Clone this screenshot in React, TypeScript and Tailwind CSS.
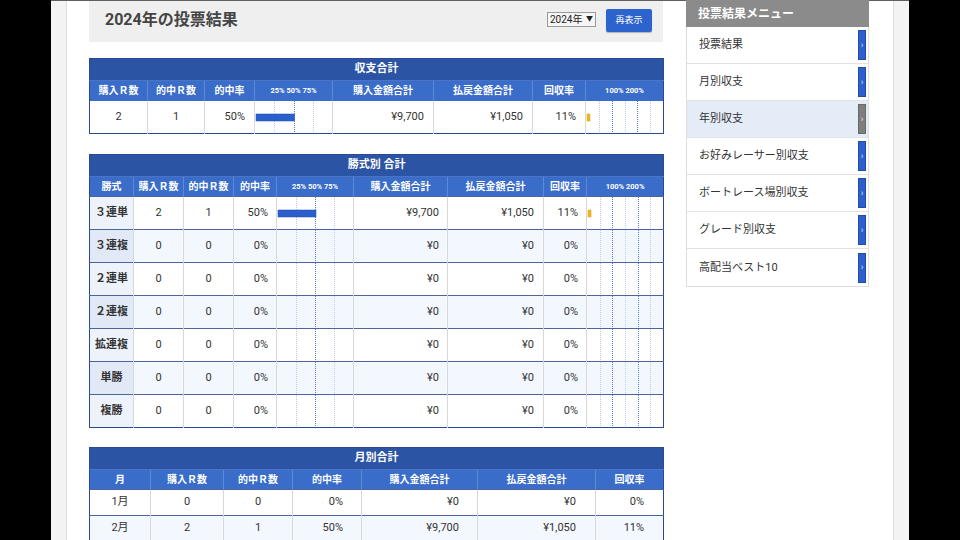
import React from "react"

const FONT = "font-['Roboto','Noto_Sans_CJK_JP',sans-serif]"

// dotted guide lines + bar, drawn as a small chart
function RateBar({ width, value, max, lines, strong, color }: {
  width: number
  value: number
  max: number
  lines: number[]
  strong: number[]
  color: string
}) {
  const w = Math.max(0, Math.min(value / max, 1) * width)
  return (
    <svg width={width} height={32} className="block">
      {lines.map((l) => {
        const x = Math.round((l / max) * width) + 0.5
        return (
          <line
            key={l}
            x1={x}
            x2={x}
            y1={0}
            y2={32}
            stroke={strong.includes(l) ? "#5a7fc9" : "#bccbe9"}
            strokeWidth={1}
            strokeDasharray="1 1"
          />
        )
      })}
      {value > 0 && (
        <rect x={1} y={13} width={Math.max(w, 3)} height={7} fill={color} stroke={color === "#f1b520" ? "#e0a010" : "#1f4db0"} strokeWidth={0.5} />
      )}
    </svg>
  )
}

const th = "border-l border-[#5f88d6] first:border-l-0 text-[10px] font-bold text-white text-center h-[20px] p-0"
const thSmall = "border-l border-[#5f88d6] text-[7.5px] text-white text-center h-[20px] p-0"
const td = "border-l border-[#d8d8d8] first:border-l-0 text-[11px] text-[#333] p-0"

function TitleRow({ span, title }: { span: number; title: string }) {
  return (
    <tr>
      <th colSpan={span} className="h-[22px] bg-[#2c54a4] text-[11px] font-bold text-white text-center border-b border-[#4a74c4]">
        {title}
      </th>
    </tr>
  )
}

function SummaryTable() {
  return (
    <table className="w-full table-fixed border-collapse border border-[#2a4a90]">
      <colgroup>
        <col className="w-[58px]" />
        <col className="w-[57px]" />
        <col className="w-[50px]" />
        <col className="w-[78px]" />
        <col className="w-[101px]" />
        <col className="w-[99px]" />
        <col className="w-[53px]" />
        <col className="w-[78px]" />
      </colgroup>
      <thead>
        <TitleRow span={8} title="収支合計" />
        <tr className="bg-[#3a6cca]">
          <th className={th}>購入Ｒ数</th>
          <th className={th}>的中Ｒ数</th>
          <th className={th}>的中率</th>
          <th className={thSmall}>25% 50% 75%</th>
          <th className={th}>購入金額合計</th>
          <th className={th}>払戻金額合計</th>
          <th className={th}>回収率</th>
          <th className={thSmall}>100% 200%</th>
        </tr>
      </thead>
      <tbody>
        <tr className="h-[33px] bg-white">
          <td className={td + " text-center"}>2</td>
          <td className={td + " text-center"}>1</td>
          <td className={td + " text-right pr-[9px]"}>50%</td>
          <td className={td}>
            <RateBar width={77} value={50} max={100} lines={[25, 50, 75]} strong={[50]} color="#2b60cc" />
          </td>
          <td className={td + " text-right pr-[9px]"}>¥9,700</td>
          <td className={td + " text-right pr-[9px]"}>¥1,050</td>
          <td className={td + " text-right pr-[9px]"}>11%</td>
          <td className={td}>
            <RateBar width={77} value={11} max={300} lines={[50, 100, 150, 200, 250]} strong={[100, 200]} color="#f1b520" />
          </td>
        </tr>
      </tbody>
    </table>
  )
}

const byType = [
  { name: "３連単", buy: 2, hit: 1, rate: 50, spent: "¥9,700", back: "¥1,050", ret: 11 },
  { name: "３連複", buy: 0, hit: 0, rate: 0, spent: "¥0", back: "¥0", ret: 0 },
  { name: "２連単", buy: 0, hit: 0, rate: 0, spent: "¥0", back: "¥0", ret: 0 },
  { name: "２連複", buy: 0, hit: 0, rate: 0, spent: "¥0", back: "¥0", ret: 0 },
  { name: "拡連複", buy: 0, hit: 0, rate: 0, spent: "¥0", back: "¥0", ret: 0 },
  { name: "単勝", buy: 0, hit: 0, rate: 0, spent: "¥0", back: "¥0", ret: 0 },
  { name: "複勝", buy: 0, hit: 0, rate: 0, spent: "¥0", back: "¥0", ret: 0 },
]

function TypeTable() {
  return (
    <table className="w-full table-fixed border-collapse border border-[#2a4a90]">
      <colgroup>
        <col className="w-[44px]" />
        <col className="w-[50px]" />
        <col className="w-[50px]" />
        <col className="w-[43px]" />
        <col className="w-[77px]" />
        <col className="w-[94px]" />
        <col className="w-[96px]" />
        <col className="w-[43px]" />
        <col className="w-[77px]" />
      </colgroup>
      <thead>
        <TitleRow span={9} title="勝式別 合計" />
        <tr className="bg-[#3a6cca]">
          <th className={th}>勝式</th>
          <th className={th}>購入Ｒ数</th>
          <th className={th}>的中Ｒ数</th>
          <th className={th}>的中率</th>
          <th className={thSmall}>25% 50% 75%</th>
          <th className={th}>購入金額合計</th>
          <th className={th}>払戻金額合計</th>
          <th className={th}>回収率</th>
          <th className={thSmall}>100% 200%</th>
        </tr>
      </thead>
      <tbody>
        {byType.map((r, i) => (
          <tr key={r.name} className={"h-[33px] border-t border-[#4c6499] " + (i % 2 ? "bg-[#f3f7fe]" : "bg-white")}>
            <td className={td + " text-center font-bold text-[10px] " + (i % 2 ? "bg-[#e1e9f7]" : "bg-[#edf2fb]")}>
              {r.name}
            </td>
            <td className={td + " text-center"}>{r.buy}</td>
            <td className={td + " text-center"}>{r.hit}</td>
            <td className={td + " text-right pr-[8px]"}>{r.rate}%</td>
            <td className={td}>
              <RateBar width={76} value={r.rate} max={100} lines={[25, 50, 75]} strong={[50]} color="#2b60cc" />
            </td>
            <td className={td + " text-right pr-[8px]"}>{r.spent}</td>
            <td className={td + " text-right pr-[9px]"}>{r.back}</td>
            <td className={td + " text-right pr-[8px]"}>{r.ret}%</td>
            <td className={td}>
              <RateBar width={76} value={r.ret} max={300} lines={[50, 100, 150, 200, 250]} strong={[100, 200]} color="#f1b520" />
            </td>
          </tr>
        ))}
      </tbody>
    </table>
  )
}

const monthly = [
  { m: "1月", buy: 0, hit: 0, rate: "0%", spent: "¥0", back: "¥0", ret: "0%" },
  { m: "2月", buy: 2, hit: 1, rate: "50%", spent: "¥9,700", back: "¥1,050", ret: "11%" },
]

function MonthTable() {
  return (
    <table className="w-full table-fixed border-collapse border border-[#2a4a90]">
      <colgroup>
        <col className="w-[61px]" />
        <col className="w-[73px]" />
        <col className="w-[69px]" />
        <col className="w-[69px]" />
        <col className="w-[116px]" />
        <col className="w-[118px]" />
        <col className="w-[68px]" />
      </colgroup>
      <thead>
        <TitleRow span={7} title="月別合計" />
        <tr className="bg-[#3a6cca]">
          <th className={th}>月</th>
          <th className={th}>購入Ｒ数</th>
          <th className={th}>的中Ｒ数</th>
          <th className={th}>的中率</th>
          <th className={th}>購入金額合計</th>
          <th className={th}>払戻金額合計</th>
          <th className={th}>回収率</th>
        </tr>
      </thead>
      <tbody>
        {monthly.map((r, i) => (
          <tr key={r.m} className={"h-[26px] border-t border-[#4c6499] " + (i % 2 ? "bg-[#f3f7fe]" : "bg-white")}>
            <td className={td + " text-center"}>{r.m}</td>
            <td className={td + " text-center"}>{r.buy}</td>
            <td className={td + " text-center"}>{r.hit}</td>
            <td className={td + " text-right pr-[18px]"}>{r.rate}</td>
            <td className={td + " text-right pr-[18px]"}>{r.spent}</td>
            <td className={td + " text-right pr-[19px]"}>{r.back}</td>
            <td className={td + " text-right pr-[19px]"}>{r.ret}</td>
          </tr>
        ))}
      </tbody>
    </table>
  )
}

const menu = ["投票結果", "月別収支", "年別収支", "お好みレーサー別収支", "ボートレース場別収支", "グレード別収支", "高配当ベスト10"]

function SideMenu() {
  return (
    <aside className="w-[183px] shrink-0 self-start">
      <div className="h-[27px] bg-[#8b8b8b] pl-3 flex items-center text-[12px] font-bold text-white -mt-px">投票結果メニュー</div>
      <ul className="border-x border-b border-[#dedede]">
        {menu.map((m) => {
          const active = m === "年別収支"
          return (
            <li
              key={m}
              className={"h-[37px] flex items-center justify-between pl-3 pr-[2px] border-b border-[#e2e2e2] last:border-b-0 " + (active ? "bg-[#e4ecf8]" : "bg-white")}
            >
              <span className="text-[11px] text-[#333] mt-px">{m}</span>
              <span
                className={"w-[8px] h-[30px] flex items-center justify-center text-[9px] leading-none text-[#dfe7ff] border " + (active ? "bg-[#7e7e7e] border-[#6a6a6a]" : "bg-[#2c5fcc] border-[#1f4cae]")}
              >
                ›
              </span>
            </li>
          )
        })}
      </ul>
    </aside>
  )
}

export default function App() {
  return (
    <div className={"w-[960px] h-[540px] overflow-hidden bg-black " + FONT}>
      <div className="mx-[51px] h-full bg-[#f3f3f3] border-t border-[#5f5f5f] px-[15px]">
        <div className="h-full bg-white border-x border-[#dcdcdc] flex gap-[23px] pl-[22px] pr-[22px]">
          <main className="w-[574px] shrink-0 flex flex-col">
            <div className="h-[41px] shrink-0 bg-[#efefef] flex items-center justify-between pl-4 pr-[11px]">
              <h1 className="text-[16px] font-bold text-[#444] -mt-[4px]">2024年の投票結果</h1>
              <div className="flex items-center gap-[10px]">
                <div className="h-[15px] w-[49px] border border-[#9a9a9a] bg-[#f6f6f6] flex items-center justify-between px-[2px] text-[10px] text-[#222] -mt-[4px]">
                  <span>2024年</span>
                  <span className="text-[7px]">▼</span>
                </div>
                <button className="h-[23px] w-[46px] bg-[#2c63cc] rounded-[2px] text-[9px] text-white shadow-[0_1px_1px_rgba(0,0,0,0.25)] -mt-[2px]">
                  再表示
                </button>
              </div>
            </div>
            <div className="mt-[16px] shrink-0">
              <SummaryTable />
            </div>
            <div className="mt-[20px] shrink-0">
              <TypeTable />
            </div>
            <div className="mt-[19px] shrink-0">
              <MonthTable />
            </div>
          </main>
          <SideMenu />
        </div>
      </div>
    </div>
  )
}
